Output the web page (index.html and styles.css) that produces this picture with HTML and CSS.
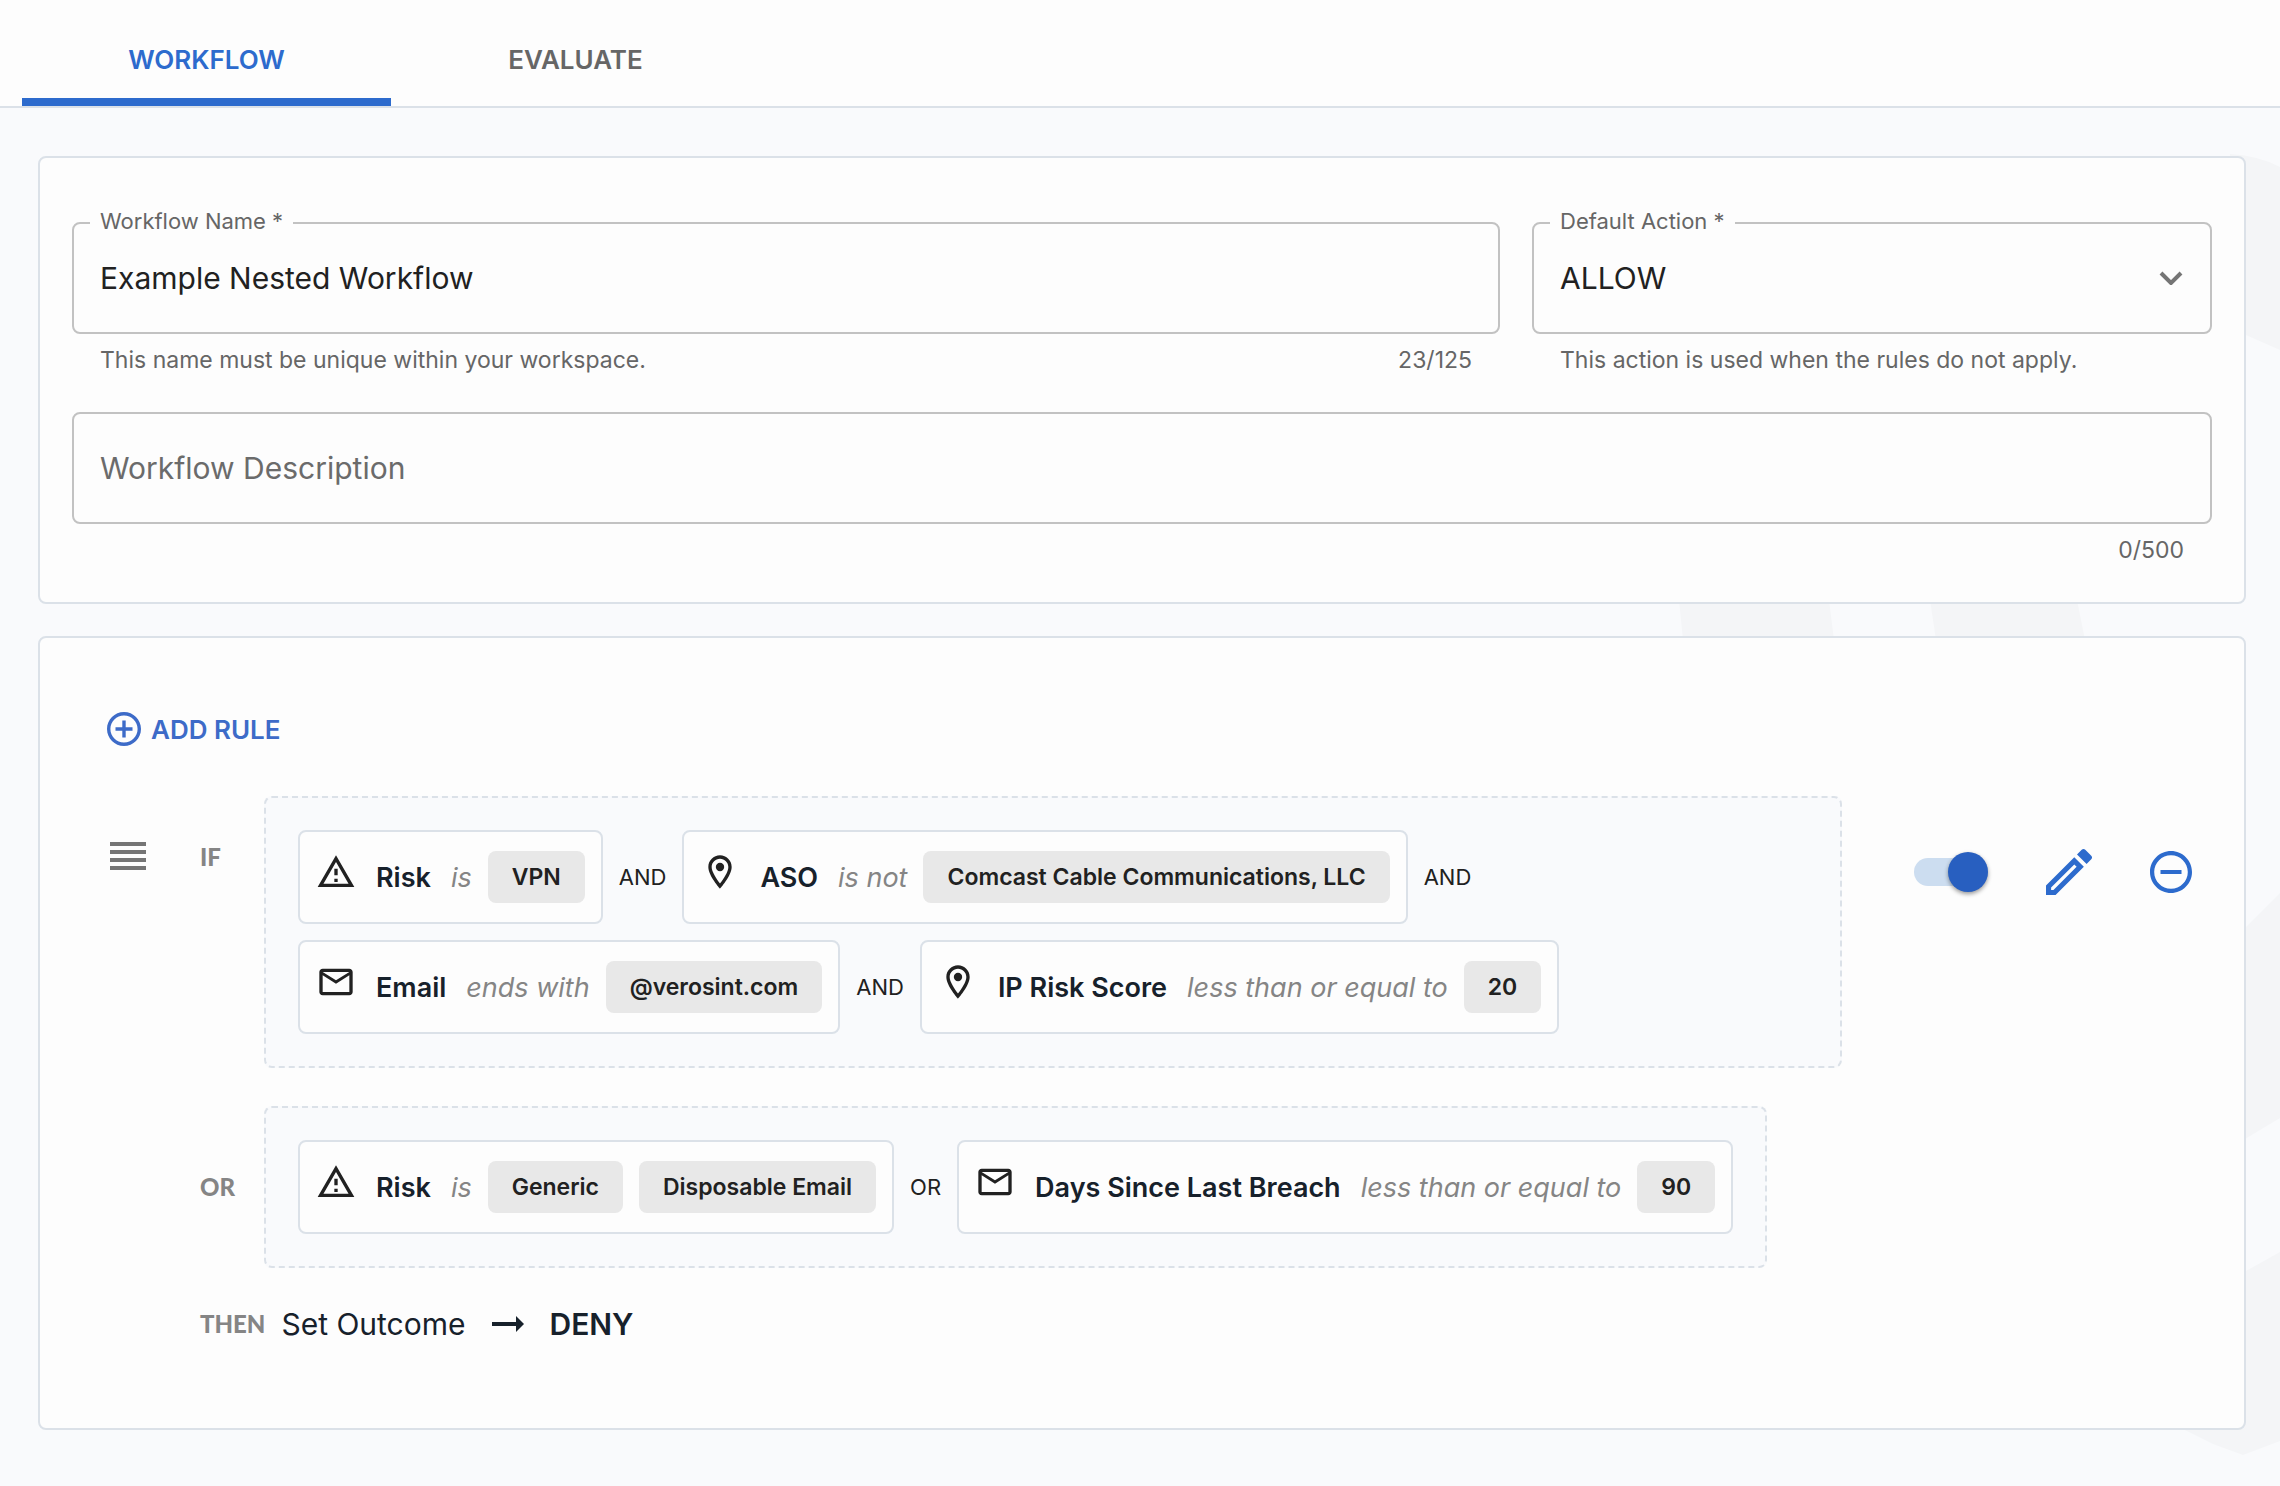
FILE: index.html
```html
<!DOCTYPE html>
<html lang="en">
<head>
  <meta charset="utf-8">
  <meta name="viewport" content="width=device-width, initial-scale=1.0">
  <title>Example Nested Workflow</title>
  <link rel="stylesheet" href="styles.css">
</head>
<body>
  <!-- Shared icons -->
  <svg class="icon-defs" aria-hidden="true">
    <symbol id="icon-warning" viewBox="0 0 24 24">
      <path d="M12 5.99 19.53 19H4.47L12 5.99M12 2 1 21h22L12 2zm1 14h-2v2h2v-2zm0-6h-2v4h2v-4z"/>
    </symbol>
    <symbol id="icon-place" viewBox="0 0 24 24">
      <path d="M12 2C8.13 2 5 5.13 5 9c0 5.25 7 13 7 13s7-7.75 7-13c0-3.87-3.13-7-7-7zM7 9c0-2.76 2.24-5 5-5s5 2.24 5 5c0 2.88-2.88 7.19-5 9.88C9.92 16.21 7 11.85 7 9z"/>
      <circle cx="12" cy="9" r="2.5"/>
    </symbol>
    <symbol id="icon-mail" viewBox="0 0 24 24">
      <path d="M22 6c0-1.1-.9-2-2-2H4c-1.1 0-2 .9-2 2v12c0 1.1.9 2 2 2h16c1.1 0 2-.9 2-2V6zm-2 0-8 5-8-5h16zm0 12H4V8l8 5 8-5v10z"/>
    </symbol>
  </svg>

  <div class="page">
    <!-- Watermark -->
    <svg class="watermark" viewBox="0 0 610 1486" aria-hidden="true">
      <path d="M9 600h150l5 40H13zM260 600h147l8 40H266z"/>
      <path d="M560 154q30 2 50 13v183l-50-22zM560 943l50-50v225l-50 30zM560 1280l50-28v189l-37 14-30-11-28-14 45-30z"/>
    </svg>

    <!-- Tabs -->
    <nav class="tabs" role="tablist">
      <button class="tab active" role="tab" aria-selected="true">WORKFLOW</button>
      <button class="tab" role="tab" aria-selected="false">EVALUATE</button>
    </nav>

    <main class="content">
      <!-- Workflow details -->
      <form class="card details">
        <div class="field-row">
          <div class="field">
            <div class="field-box">
              <label class="field-label" for="workflow-name">Workflow Name *</label>
              <input class="field-input" id="workflow-name" type="text" value="Example Nested Workflow">
            </div>
            <div class="field-help">
              <span>This name must be unique within your workspace.</span>
              <span>23/125</span>
            </div>
          </div>
          <div class="field">
            <div class="field-box">
              <label class="field-label" for="default-action">Default Action *</label>
              <select class="field-input" id="default-action">
                <option>ALLOW</option>
                <option>DENY</option>
              </select>
              <svg class="chevron" viewBox="0 0 24 14" aria-hidden="true"><path d="M2 2l10 10L22 2"/></svg>
            </div>
            <div class="field-help">
              <span>This action is used when the rules do not apply.</span>
            </div>
          </div>
        </div>
        <div class="field">
          <div class="field-box">
            <input class="field-input" type="text" placeholder="Workflow Description" aria-label="Workflow Description">
          </div>
          <div class="field-help end">
            <span>0/500</span>
          </div>
        </div>
      </form>

      <!-- Rules -->
      <section class="card rules">
        <button class="add-rule">
          <svg viewBox="2 2 20 20" aria-hidden="true"><path d="M13 7h-2v4H7v2h4v4h2v-4h4v-2h-4V7zm-1-5C6.480 2 2 6.480 2 12s4.480 10 10 10 10-4.480 10-10S17.520 2 12 2zm0 18c-4.410 0-8-3.590-8-8s3.590-8 8-8 8 3.590 8 8-3.590 8-8 8z"/></svg>
          ADD RULE
        </button>

        <div class="rule">
          <svg class="drag-handle" viewBox="0 0 36 28" aria-hidden="true"><path d="M0 0h36v4H0zM0 8h36v4H0zM0 16h36v4H0zM0 24h36v4H0z"/></svg>

          <div class="clauses">
            <div class="clause first">
              <span class="keyword">IF</span>
              <div class="group wide">
                <div class="condition">
                  <svg class="icon"><use href="#icon-warning"/></svg>
                  <span class="signal">Risk</span>
                  <span class="operator">is</span>
                  <span class="value">VPN</span>
                </div>
                <span class="joiner">AND</span>
                <div class="condition">
                  <svg class="icon"><use href="#icon-place"/></svg>
                  <span class="signal">ASO</span>
                  <span class="operator">is not</span>
                  <span class="value">Comcast Cable Communications, LLC</span>
                </div>
                <span class="joiner">AND</span>
                <div class="condition">
                  <svg class="icon"><use href="#icon-mail"/></svg>
                  <span class="signal">Email</span>
                  <span class="operator">ends with</span>
                  <span class="value">@verosint.com</span>
                </div>
                <span class="joiner">AND</span>
                <div class="condition">
                  <svg class="icon"><use href="#icon-place"/></svg>
                  <span class="signal">IP Risk Score</span>
                  <span class="operator">less than or equal to</span>
                  <span class="value">20</span>
                </div>
              </div>
            </div>

            <div class="clause">
              <span class="keyword">OR</span>
              <div class="group">
                <div class="condition">
                  <svg class="icon"><use href="#icon-warning"/></svg>
                  <span class="signal">Risk</span>
                  <span class="operator">is</span>
                  <span class="value">Generic</span>
                  <span class="value">Disposable Email</span>
                </div>
                <span class="joiner">OR</span>
                <div class="condition">
                  <svg class="icon"><use href="#icon-mail"/></svg>
                  <span class="signal">Days Since Last Breach</span>
                  <span class="operator">less than or equal to</span>
                  <span class="value">90</span>
                </div>
              </div>
            </div>

            <div class="outcome">
              <span class="keyword">THEN</span>
              <span>Set Outcome</span>
              <svg class="arrow" viewBox="0 0 32 16" aria-hidden="true"><path d="M0 6h24V0l8 8-8 8v-6H0z"/></svg>
              <strong>DENY</strong>
            </div>
          </div>

          <div class="rule-actions">
            <input class="switch" type="checkbox" role="switch" aria-label="Rule enabled" checked>
            <button class="icon-btn" aria-label="Edit rule">
              <svg class="edit" viewBox="3 3 18 18" aria-hidden="true"><path d="M14.060 9.020l.92.92L5.920 19H5v-.92l9.060-9.060M17.660 3c-.25 0-.51.1-.7.290l-1.830 1.830 3.750 3.750 1.830-1.830c.39-.39.39-1.020 0-1.410l-2.340-2.340c-.2-.2-.45-.29-.71-.29zm-3.600 3.190L3 17.250V21h3.750L17.810 9.940l-3.750-3.750z"/></svg>
            </button>
            <button class="icon-btn" aria-label="Remove rule">
              <svg class="remove" viewBox="2 2 20 20" aria-hidden="true"><path d="M7 11v2h10v-2H7zm5-9C6.480 2 2 6.480 2 12s4.480 10 10 10 10-4.480 10-10S17.520 2 12 2zm0 18c-4.410 0-8-3.590-8-8s3.590-8 8-8 8 3.590 8 8-3.590 8-8 8z"/></svg>
            </button>
          </div>
        </div>
      </section>
    </main>
  </div>
</body>
</html>
```
FILE: styles.css
```css
* {
  margin: 0;
  padding: 0;
  box-sizing: border-box;
}

body {
  font-family: Inter, Roboto, sans-serif;
  font-size: 22px;
  color: #212121;
  background: #f9fafc;
}

button,
input,
select {
  font: inherit;
  color: inherit;
  background: none;
  border: none;
}

button {
  cursor: pointer;
}

svg {
  display: block;
  flex-shrink: 0;
  fill: currentColor;
}

.icon-defs {
  position: absolute;
  width: 0;
  height: 0;
}

.page {
  position: relative;
  min-height: 100vh;
  overflow: hidden;
}

.watermark {
  position: absolute;
  top: 0;
  right: 0;
  width: 610px;
  height: 1486px;
  fill: #f4f5f7;
}

/* Tabs */

.tabs {
  position: relative;
  display: flex;
  padding-left: 22px;
  background: #fdfdfd;
  border-bottom: 2px solid #dbe1e8;
}

.tab {
  width: 369px;
  height: 106px;
  padding: 28px 0 8px;
  font-size: 26px;
  font-weight: 600;
  color: #666;
  border-bottom: 8px solid transparent;
}

.tab.active {
  color: #2d6bcd;
  border-bottom-color: #2d6bcd;
}

.content {
  position: relative;
  display: flex;
  flex-direction: column;
  gap: 32px;
  padding: 48px 34px 56px 38px;
}

.card {
  background: #fdfdfd;
  border: 2px solid #dbe1e8;
  border-radius: 8px;
}

/* Workflow details */

.details {
  display: flex;
  flex-direction: column;
  gap: 36px;
  padding: 64px 32px 36px;
}

.field-row {
  display: grid;
  grid-template-columns: 21fr 10fr;
  gap: 32px;
}

.field-box {
  position: relative;
}

.field-input {
  display: block;
  width: 100%;
  height: 112px;
  padding: 0 26px;
  font-size: 30px;
  border: 2px solid #c2c2c2;
  border-radius: 8px;
  appearance: none;
}

.field-input::placeholder {
  color: #6b6b6b;
  opacity: 1;
}

.field-label {
  position: absolute;
  top: -15px;
  left: 18px;
  padding: 0 10px;
  line-height: 28px;
  color: #666;
  background: #fdfdfd;
}

.chevron {
  position: absolute;
  top: 50%;
  right: 29px;
  width: 24px;
  height: 14px;
  margin-top: -7px;
  fill: none;
  stroke: #757575;
  stroke-width: 4;
  pointer-events: none;
}

.field-help {
  display: flex;
  justify-content: space-between;
  padding: 10px 28px 0;
  font-size: 23px;
  line-height: 32px;
  color: #666;
}

.field-help.end {
  justify-content: flex-end;
}

/* Rules */

.rules {
  padding: 64px 52px 86px 67px;
}

.add-rule {
  display: flex;
  align-items: center;
  gap: 10px;
  height: 54px;
  font-size: 26px;
  font-weight: 600;
  color: #3d6bc8;
}

.add-rule svg {
  width: 34px;
  height: 34px;
}

.rule {
  display: flex;
  align-items: flex-start;
  margin-top: 40px;
}

.drag-handle {
  width: 36px;
  height: 28px;
  margin: 46px 54px 0 3px;
  color: #757575;
}

.clauses {
  flex: 1;
  display: flex;
  flex-direction: column;
  gap: 38px;
}

.clause {
  display: flex;
  align-items: center;
}

.clause.first {
  align-items: flex-start;
}

.clause.first .keyword {
  margin-top: 46px;
}

.keyword {
  flex: 0 0 64px;
  font-family: Lato, sans-serif;
  font-size: 24px;
  font-weight: 900;
  line-height: 30px;
  color: #858585;
}

.group {
  display: flex;
  flex-wrap: wrap;
  align-items: center;
  gap: 16px;
  padding: 32px;
  background: #f9fafc;
  border: 2px dashed #dbe1e8;
  border-radius: 8px;
}

.group.wide {
  flex: 1;
}

.condition {
  display: flex;
  align-items: center;
  gap: 16px;
  height: 94px;
  padding: 0 16px;
  background: #fdfdfd;
  border: 2px solid #dbe1e8;
  border-radius: 8px;
}

.icon {
  width: 40px;
  height: 40px;
  margin: 0 4px 10px 0;
}

.signal {
  margin-right: 4px;
  font-size: 27px;
  font-weight: 600;
  color: #17212b;
}

.operator {
  font-size: 27px;
  font-style: italic;
  color: #858585;
}

.value {
  padding: 0 24px;
  font-size: 23px;
  font-weight: 600;
  line-height: 52px;
  background: #e8e8e8;
  border-radius: 8px;
}

.outcome {
  display: flex;
  align-items: center;
  font-size: 30px;
  line-height: 36px;
  color: #17212b;
}

.outcome .keyword {
  margin-right: 16px;
}

.outcome strong {
  font-weight: 600;
}

.arrow {
  width: 32px;
  height: 16px;
  margin: 0 26px;
}

.rule-actions {
  display: flex;
  align-items: center;
  gap: 58px;
  height: 152px;
  margin-left: 72px;
  color: #2d6bcd;
}

.switch {
  display: flex;
  align-items: center;
  justify-content: flex-end;
  width: 74px;
  height: 28px;
  background: #ccddf0;
  border-radius: 14px;
  appearance: none;
  cursor: pointer;
}

.switch::before {
  content: "";
  width: 40px;
  height: 40px;
  background: #285fc0;
  border-radius: 50%;
  box-shadow: 0 2px 4px rgba(0, 0, 0, 0.4);
}

.icon-btn .edit {
  width: 46px;
  height: 46px;
}

.icon-btn .remove {
  width: 42px;
  height: 42px;
}
```
